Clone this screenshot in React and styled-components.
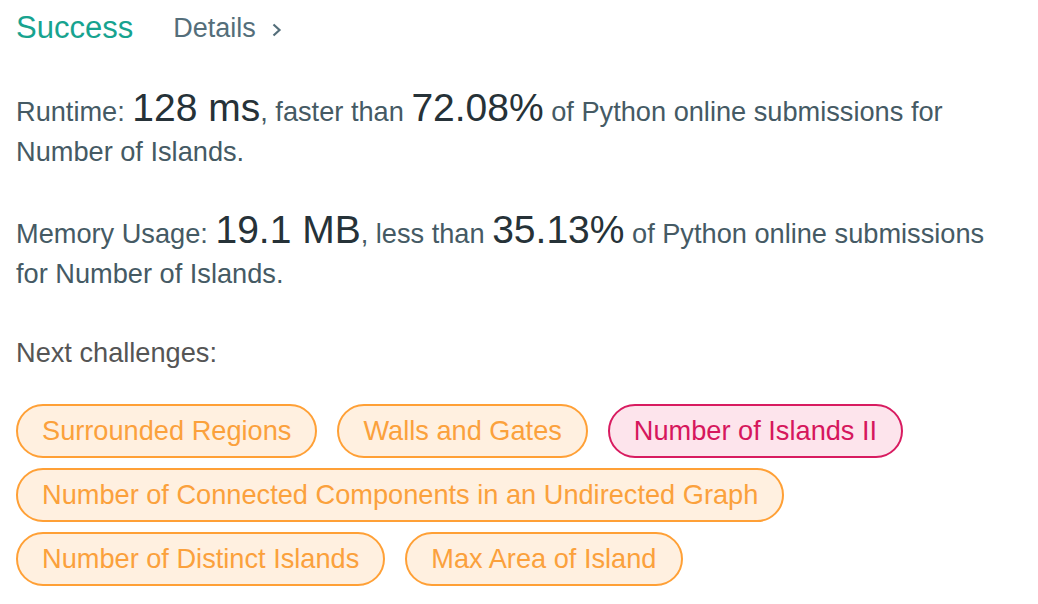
import React from "react"
import styled, { createGlobalStyle } from "styled-components"

const GlobalStyle = createGlobalStyle`
  html, body {
    margin: 0;
    padding: 0;
    background: #fff;
  }
  body {
    font-family: "Liberation Sans", Arial, sans-serif;
  }
`

const Page = styled.div`
  padding: 0 16px;
  width: 1000px;
`

const Header = styled.div`
  display: flex;
  align-items: center;
  height: 56px;
`

const Status = styled.span`
  font-size: 31px;
  color: #17a38f;
  margin-right: 40px;
`

const DetailsLink = styled.a`
  display: flex;
  align-items: center;
  gap: 16px;
  font-size: 27px;
  color: #546e7a;
  text-decoration: none;
  svg {
    margin-top: 4px;
  }
`

const Stat = styled.p`
  margin: ${p => (p.$first ? "32px" : "38px")} 0 0;
  font-size: 27.2px;
  line-height: 40px;
  color: #455a64;
`

const Big = styled.span`
  font-size: 39px;
  color: #263238;
`

const NextTitle = styled.p`
  margin: 39px 0 0;
  font-size: 27.2px;
  line-height: 40px;
  color: #555;
`

const Tags = styled.div`
  display: flex;
  flex-wrap: wrap;
  gap: 10px 20px;
  margin-top: 31px;
`

const Tag = styled.a`
  display: inline-flex;
  align-items: center;
  height: 54px;
  box-sizing: border-box;
  padding: 0 24px;
  border-radius: 27px;
  font-size: 27.2px;
  text-decoration: none;
  border: 2px solid ${p => (p.$hot ? "#d81b60" : "#ffa036")};
  background: ${p => (p.$hot ? "#fde4ec" : "#fff0e0")};
  color: ${p => (p.$hot ? "#d6175d" : "#fba13c")};
`

const challenges = [
  { name: "Surrounded Regions" },
  { name: "Walls and Gates" },
  { name: "Number of Islands II", hot: true },
  { name: "Number of Connected Components in an Undirected Graph" },
  { name: "Number of Distinct Islands" },
  { name: "Max Area of Island" },
]

export default function App() {
  return (
    <Page>
      <GlobalStyle />
      <Header>
        <Status>Success</Status>
        <DetailsLink href="#">
          Details
          <svg width="10" height="14" viewBox="0 0 10 14">
            <polyline points="1.5,1.5 7.5,7 1.5,12.5" fill="none" stroke="#546e7a" strokeWidth="2.2" />
          </svg>
        </DetailsLink>
      </Header>
      <Stat $first>
        Runtime: <Big>128 ms</Big>, faster than <Big>72.08%</Big> of Python online submissions for Number of Islands.
      </Stat>
      <Stat>
        Memory Usage: <Big>19.1 MB</Big>, less than <Big>35.13%</Big> of Python online submissions for Number of Islands.
      </Stat>
      <NextTitle>Next challenges:</NextTitle>
      <Tags>
        {challenges.map(c => (
          <Tag key={c.name} href="#" $hot={c.hot}>{c.name}</Tag>
        ))}
      </Tags>
    </Page>
  )
}
